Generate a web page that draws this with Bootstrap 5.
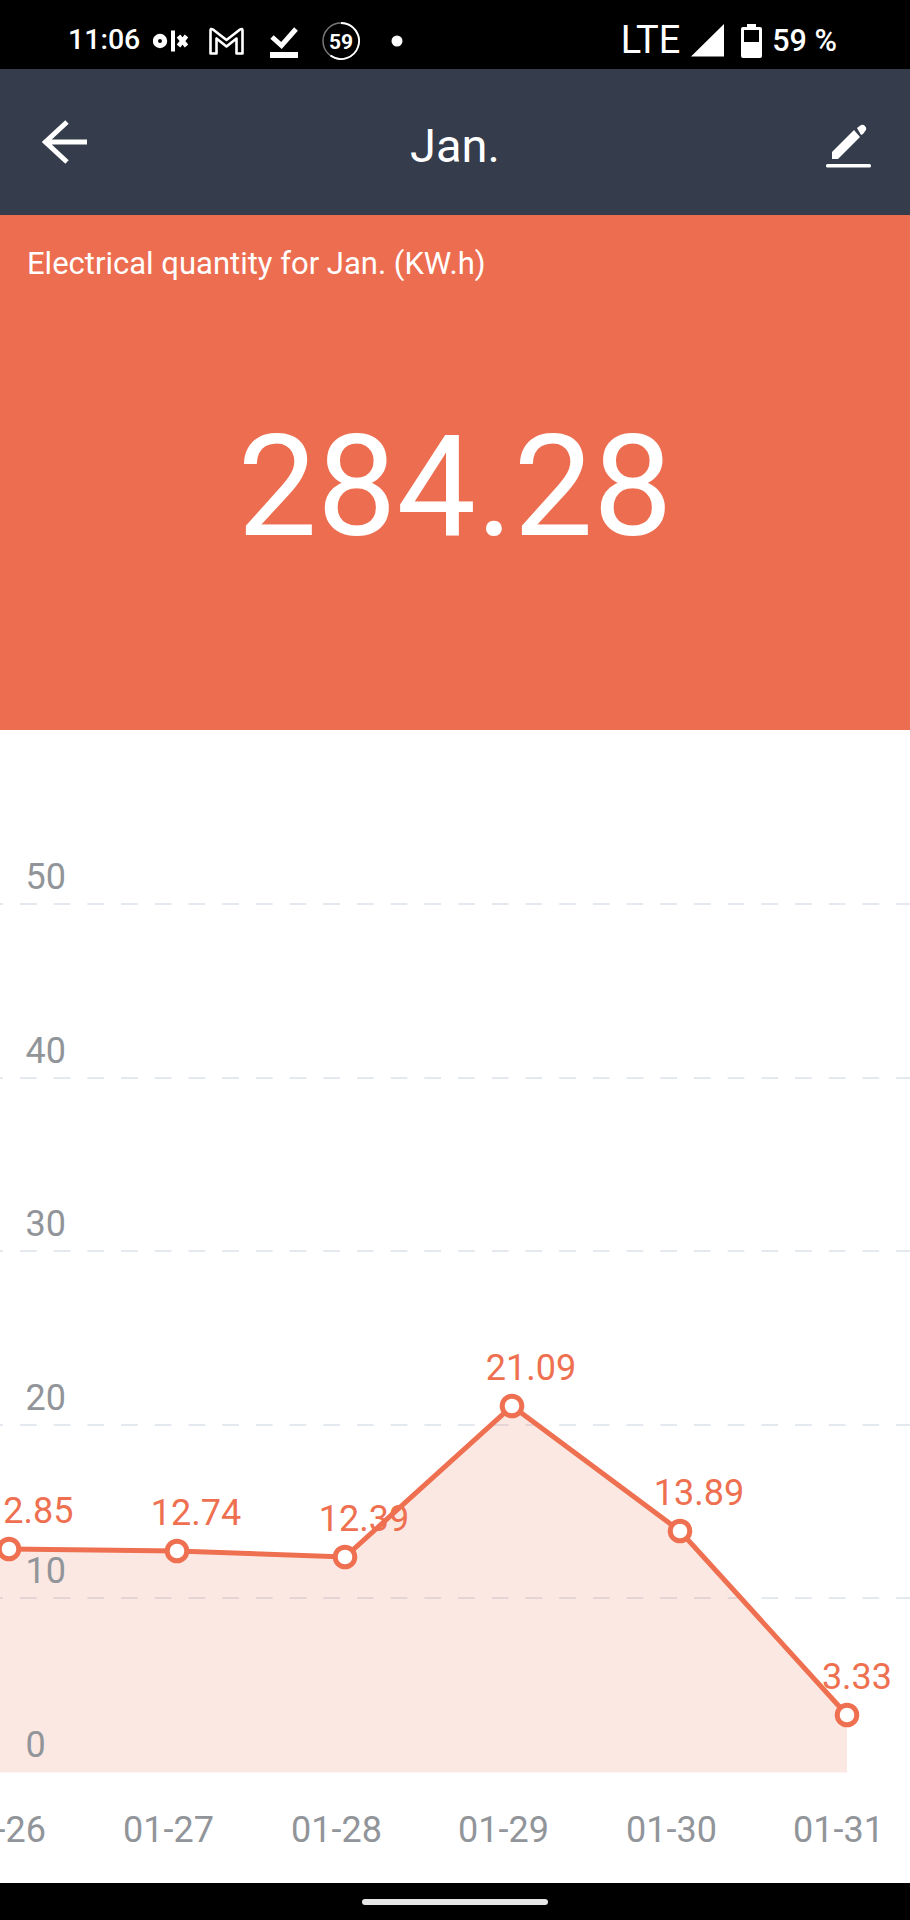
<!DOCTYPE html>
<html lang="en">
<head>
  <meta charset="UTF-8" />
  <meta name="viewport" content="width=device-width, initial-scale=1.0" />
  <title>Jan.</title>
  <link rel="stylesheet" href="https://cdn.jsdelivr.net/npm/bootstrap@5.3.0/dist/css/bootstrap.min.css" />
  <style>
    body { background: #fff; font-family: Roboto, "Liberation Sans", sans-serif; width: 910px; height: 1920px; overflow: hidden; }
    .status-bar { height: 69px; background: #000; color: #fff; padding: 12px 73px 0 68px; font-size: 28.5px; font-weight: 500; }
    .status-bar svg { display: block; flex: none; }
    .status-time { width: 70px; }
    .lte { font-size: 38px; font-weight: 400; }
    .olx-icon { margin-left: 15px; }
    .mail-icon { margin-left: 19px; }
    .check-icon { margin-left: 24px; }
    .count-icon { margin-left: 23px; }
    .dot-icon { margin-left: 30px; }
    .signal-icon { margin-left: 11px; }
    .battery-icon { margin-left: 17px; }
    .battery-text { margin-left: 10px; font-size: 30.5px; }
    .app-bar { height: 146px; background: #353c4b; color: #fff; padding: 0 38px 0 42px; }
    .app-title { font-size: 47px; line-height: 1; margin-top: 3px; }
    .summary { height: 515px; background: #ed6d50; color: #fff; }
    .summary-label { font-size: 31px; padding: 30px 0 0 27px; line-height: 1.2; }
    .summary-value { font-size: 141.5px; line-height: 1; padding-top: 135px; }
    .chart-wrap { height: 1153px; }
    .chart-wrap svg { display: block; }
    .axis-y, .axis-x { font-size: 36px; fill: #919599; }
    .point-val { font-size: 36px; fill: #ee7050; }
    .nav-strip { height: 37px; background: #000; }
    .nav-pill { width: 186px; height: 6px; background: #e6e6e6; border-radius: 3px; margin-top: 16px; }
  </style>
</head>
<body>
  <div class="status-bar d-flex align-items-center">
    <span class="status-time">11:06</span>
    <svg class="olx-icon" width="35" height="24" viewBox="0 0 35 24"><circle cx="7" cy="12" r="4.600" fill="none" stroke="#fff" stroke-width="5.200"/><rect x="18" y="1.500" width="4" height="21" fill="#fff"/><path d="M25.500 7l8 10M33.500 7l-8 10" stroke="#fff" stroke-width="4.500"/></svg>
    <svg class="mail-icon" width="39" height="30" viewBox="0 0 39 30"><path d="M3.500 27.500V4.500q0-2.500 2.500-1L19.500 14 33 3.500q2.500-1.500 2.500 1v23H29.500V12.500L19.500 20.500 9.500 12.500v15z" fill="none" stroke="#fff" stroke-width="2.600" stroke-linejoin="round"/></svg>
    <svg class="check-icon" width="28" height="34" viewBox="0 0 28 34"><path d="M2 13l9.500 8.500L26 5" fill="none" stroke="#fff" stroke-width="5"/><rect x="0" y="28" width="28" height="6" fill="#fff"/></svg>
    <svg class="count-icon" width="40" height="40" viewBox="0 0 40 40"><circle cx="20" cy="20" r="18" fill="none" stroke="#777" stroke-width="1.500"/><path d="M20 2a18 18 0 1 1-10.500 32.600" fill="none" stroke="#fff" stroke-width="1.800"/><text x="20" y="27.500" text-anchor="middle" font-size="21" font-weight="700" fill="#fff">59</text></svg>
    <svg class="dot-icon" width="12" height="12" viewBox="0 0 12 12"><circle cx="6" cy="6" r="5.500" fill="#fff"/></svg>
    <span class="lte ms-auto">LTE</span>
    <svg class="signal-icon" width="33" height="33" viewBox="0 0 33 33"><path d="M0 32.500L33 0v32.500z" fill="#fff"/></svg>
    <svg class="battery-icon" width="21" height="34" viewBox="0 0 21 34"><path d="M6 0h9v3h4q2 0 2 2v27q0 2-2 2H2q-2 0-2-2V5q0-2 2-2h4z" fill="#fff"/><rect x="3" y="6" width="15" height="12" fill="#000"/></svg>
    <span class="battery-text">59 %</span>
  </div>

  <div class="app-bar d-flex align-items-center justify-content-between position-relative">
    <svg width="46" height="46" viewBox="0 0 46 46"><path d="M45 23H4M25 3L3.500 23 25 43" fill="none" stroke="#fff" stroke-width="5"/></svg>
    <div class="app-title position-absolute top-50 start-50 translate-middle">Jan.</div>
    <svg width="46" height="54" viewBox="0 0 46 54"><path d="M6 37L28 15l6 7-22 22H6z" fill="#fff"/><path d="M31 13l4-3q2-1 4 1t1 4l-3 4-2 1z" fill="#fff"/><rect x="0" y="49" width="45" height="3.500" rx="1.500" fill="#fff"/></svg>
  </div>

  <div class="summary">
    <div class="summary-label">Electrical quantity for Jan. (KW.h)</div>
    <div class="summary-value text-center">284.28</div>
  </div>

  <div class="chart-wrap">
    <svg id="chart" width="910" height="1153" viewBox="0 730 910 1153"></svg>
  </div>

  <div class="nav-strip d-flex justify-content-center">
    <div class="nav-pill"></div>
  </div>

  <script>
    const points = [
      { x: 9, y: 1549, val: "2.85", valX: 73.5, valAnchor: "end", date: "-26", dateX: 46, dateAnchor: "end" },
      { x: 177, y: 1551, val: "12.74" },
      { x: 345, y: 1557, val: "12.39" },
      { x: 512, y: 1406, val: "21.09" },
      { x: 680, y: 1531, val: "13.89" },
      { x: 847, y: 1715, val: "3.33", valX: 857 }
    ];
    const dates = ["-26", "01-27", "01-28", "01-29", "01-30", "01-31"];
    const grid = [[50, 904], [40, 1078], [30, 1251], [20, 1425], [10, 1598]];
    const base = 1772.5;
    let html = "";

    grid.forEach(function (g) {
      html += `<line x1="0" x2="910" y1="${g[1]}" y2="${g[1]}" stroke="#e4e8ef" stroke-width="2" stroke-dasharray="16.7 17" stroke-dashoffset="13.7"/>`;
    });

    const line = points.map(p => p.x + "," + p.y).join(" ");
    html += `<polygon points="0,1549 ${line} 847,${base} 0,${base}" fill="#ed6d50" fill-opacity="0.16"/>`;

    grid.forEach(function (g) {
      html += `<text class="axis-y" x="25.5" y="${g[1] - 15}">${g[0]}</text>`;
    });
    html += `<text class="axis-y" x="25.5" y="1757">0</text>`;

    html += `<polyline points="0,1549 ${line}" fill="none" stroke="#ee7050" stroke-width="5"/>`;
    points.forEach(function (p, i) {
      const valX = p.valX || p.x + 19;
      const dateX = p.dateX || p.x - 8.5;
      html += `<text class="point-val" x="${valX}" y="${p.y - 26.5}" text-anchor="${p.valAnchor || "middle"}">${p.val}</text>`;
      html += `<circle cx="${p.x}" cy="${p.y}" r="9.8" fill="#fff" stroke="#ee7050" stroke-width="5"/>`;
      html += `<text class="axis-x" x="${dateX}" y="1842" text-anchor="${p.dateAnchor || "middle"}">${dates[i]}</text>`;
    });
    document.getElementById("chart").innerHTML = html;
  </script>
</body>
</html>
